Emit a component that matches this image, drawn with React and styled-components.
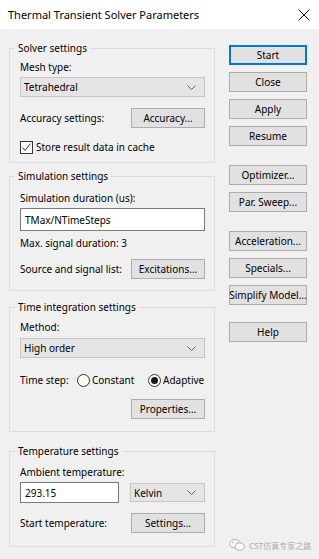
import styled, { createGlobalStyle } from "styled-components";

const Global = createGlobalStyle`
  html, body { margin: 0; padding: 0; }
  body {
    font-family: "Noto Sans", "Open Sans", sans-serif;
    font-size: 10px;
    color: #000;
  }
`;

const Window = styled.div`
  position: relative;
  width: 319px;
  height: 559px;
  background: #f0f0f0;
  overflow: hidden;
`;

const TitleBar = styled.div`
  height: 29px;
  background: #fff;
  display: flex;
  align-items: center;
  justify-content: space-between;
  padding: 0 9px 0 8px;
  box-sizing: border-box;
  font-size: 11px;
`;

const Body = styled.div`
  display: flex;
  padding: 11px 0 0 9px;
`;

const LeftColumn = styled.div`
  width: 206px;
  display: flex;
  flex-direction: column;
`;

const RightColumn = styled.div`
  margin-left: 14px;
  padding-top: 5px;
  display: flex;
  flex-direction: column;
  gap: 7px;
`;

const Group = styled.fieldset`
  margin: ${(p) => p.$mt || 0}px 0 0;
  padding: 0 9px ${(p) => p.$pb}px 10px;
  border: 1px solid #dcdcdc;
  min-width: 0;
  display: flex;
  flex-direction: column;
`;

const Legend = styled.legend`
  margin-left: -5px;
  padding: 0 3px;
  line-height: 16px;
`;

const Label = styled.div`
  margin-top: ${(p) => p.$mt || 0}px;
  line-height: 16px;
  white-space: nowrap;
`;

const Row = styled.div`
  margin-top: ${(p) => p.$mt || 0}px;
  display: flex;
  align-items: center;
  justify-content: ${(p) => p.$justify || "space-between"};
  height: 20px;
  white-space: nowrap;
`;

const Button = styled.div`
  box-sizing: border-box;
  width: ${(p) => p.$w || 74}px;
  height: 20px;
  margin-top: ${(p) => p.$mt || 0}px;
  background: #e1e1e1;
  border: 1px solid #adadad;
  display: flex;
  align-items: center;
  justify-content: center;
  white-space: nowrap;
  ${(p) => p.$default && "border: 2px solid #0078d7;"}
`;

const Select = styled.div`
  box-sizing: border-box;
  width: ${(p) => p.$w || 185}px;
  height: ${(p) => p.$h || 20}px;
  margin-top: ${(p) => p.$mt || 0}px;
  background: #e5e5e5;
  border: 1px solid #c6c6c6;
  display: flex;
  align-items: center;
  justify-content: space-between;
  padding: 0 8px 0 3px;
`;

const TextInput = styled.div`
  box-sizing: border-box;
  width: ${(p) => p.$w || 185}px;
  height: ${(p) => p.$h || 23}px;
  margin-top: ${(p) => p.$mt || 0}px;
  background: #fff;
  border: 1px solid #7a7a7a;
  display: flex;
  align-items: center;
  padding-left: 4px;
`;

const CheckRow = styled.div`
  margin-top: ${(p) => p.$mt || 0}px;
  display: flex;
  align-items: center;
  gap: 3px;
  height: 16px;
`;

const Box = styled.span`
  box-sizing: border-box;
  width: 13px;
  height: 13px;
  border: 1px solid #333;
  background: #fff;
  display: flex;
  align-items: center;
  justify-content: center;
`;

const RadioLabel = styled.div`
  width: ${(p) => p.$w}px;
  display: flex;
  align-items: center;
  gap: 2px;
`;

const Circle = styled.span`
  box-sizing: border-box;
  width: 13px;
  height: 13px;
  border-radius: 50%;
  border: 1px solid #333;
  background: #fff;
  display: flex;
  align-items: center;
  justify-content: center;
  &::after {
    content: "";
    width: 7px;
    height: 7px;
    border-radius: 50%;
    background: ${(p) => (p.$on ? "#1a1a1a" : "transparent")};
  }
`;

const TempRow = styled.div`
  margin-top: 2px;
  display: flex;
  align-items: center;
  justify-content: space-between;
  height: 21px;
`;

const Watermark = styled.div`
  position: absolute;
  left: 229px;
  top: 539px;
  display: flex;
  align-items: center;
  gap: 4px;
  white-space: nowrap;
  font-family: "Noto Sans CJK SC", sans-serif;
  font-size: 8px;
  color: #a6a6a6;
  text-shadow: 0 0 1px #fff;
`;

function Chevron() {
  return (
    <svg width="9" height="5" viewBox="0 0 9 5">
      <polyline points="0.5,0.5 4.5,4.5 8.5,0.5" fill="none" stroke="#606060" strokeWidth="1" />
    </svg>
  );
}

function CloseX() {
  return (
    <svg width="12" height="12" viewBox="0 0 12 12">
      <path d="M0.5 0.5 L11.5 11.5 M11.5 0.5 L0.5 11.5" stroke="#111" strokeWidth="1" />
    </svg>
  );
}

function Check() {
  return (
    <svg width="11" height="11" viewBox="0 0 11 11">
      <polyline points="1.5,5.5 4,8.5 9.5,1.5" fill="none" stroke="#333" strokeWidth="1" />
    </svg>
  );
}

function ChatIcon() {
  return (
    <svg width="16" height="12" viewBox="0 0 16 12">
      <ellipse cx="6" cy="4.8" rx="5.3" ry="4.2" fill="#fff" stroke="#b0b0b0" strokeWidth="1" />
      <ellipse cx="10.8" cy="7.6" rx="4.5" ry="3.6" fill="#fff" stroke="#b0b0b0" strokeWidth="1" />
      <circle cx="4" cy="3.8" r="0.8" fill="#b0b0b0" />
      <circle cx="7.5" cy="3.8" r="0.8" fill="#b0b0b0" />
    </svg>
  );
}

const buttons = [
  { text: "Start", def: true },
  { text: "Close" },
  { text: "Apply" },
  { text: "Resume" },
  { text: "Optimizer...", mt: 12 },
  { text: "Par. Sweep..." },
  { text: "Acceleration...", mt: 12 },
  { text: "Specials..." },
  { text: "Simplify Model..." },
  { text: "Help", mt: 10 },
];

export default function App() {
  return (
    <Window>
      <Global />
      <TitleBar>
        <span>Thermal Transient Solver Parameters</span>
        <CloseX />
      </TitleBar>
      <Body>
        <LeftColumn>
          <Group $pb={7}>
            <Legend>Solver settings</Legend>
            <Label $mt={3}>Mesh type:</Label>
            <Select $mt={2}>
              <span>Tetrahedral</span>
              <Chevron />
            </Select>
            <Row $mt={11}>
              <span>Accuracy settings:</span>
              <Button>Accuracy...</Button>
            </Row>
            <CheckRow $mt={11}>
              <Box>
                <Check />
              </Box>
              <span>Store result data in cache</span>
            </CheckRow>
          </Group>

          <Group $mt={5} $pb={11}>
            <Legend>Simulation settings</Legend>
            <Label $mt={6}>Simulation duration (us):</Label>
            <TextInput $mt={2}>TMax/NTimeSteps</TextInput>
            <Label $mt={4}>Max. signal duration: 3</Label>
            <Row $mt={8}>
              <span>Source and signal list:</span>
              <Button>Excitations...</Button>
            </Row>
          </Group>

          <Group $mt={8} $pb={12}>
            <Legend>Time integration settings</Legend>
            <Label $mt={4}>Method:</Label>
            <Select $mt={3}>
              <span>High order</span>
              <Chevron />
            </Select>
            <Row $mt={12} $justify="flex-start">
              <RadioLabel $w={57}>Time step:</RadioLabel>
              <RadioLabel $w={71}>
                <Circle />
                <span>Constant</span>
              </RadioLabel>
              <RadioLabel>
                <Circle $on />
                <span>Adaptive</span>
              </RadioLabel>
            </Row>
            <Row $mt={9} $justify="flex-end">
              <Button>Properties...</Button>
            </Row>
          </Group>

          <Group $mt={11} $pb={13}>
            <Legend>Temperature settings</Legend>
            <Label $mt={5}>Ambient temperature:</Label>
            <TempRow>
              <TextInput $w={99} $h={21}>293.15</TextInput>
              <Select $w={75} $h={19}>
                <span>Kelvin</span>
                <Chevron />
              </Select>
            </TempRow>
            <Row $mt={10}>
              <span>Start temperature:</span>
              <Button>Settings...</Button>
            </Row>
          </Group>
        </LeftColumn>

        <RightColumn>
          {buttons.map((b) => (
            <Button key={b.text} $w={78} $mt={b.mt} $default={b.def}>
              {b.text}
            </Button>
          ))}
        </RightColumn>
      </Body>
      <Watermark>
        <ChatIcon />
        <span>CST仿真专家之路</span>
      </Watermark>
    </Window>
  );
}
